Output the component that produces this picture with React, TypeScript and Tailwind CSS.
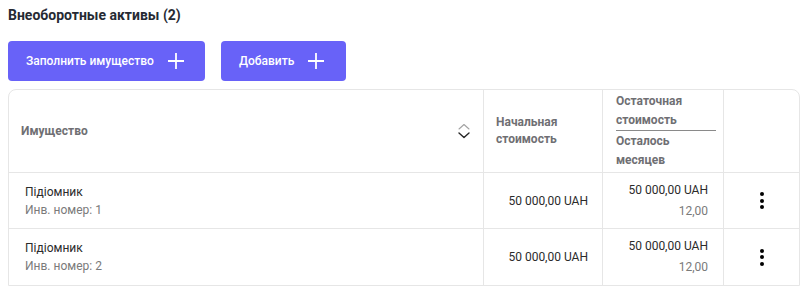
const ROWS = [
  { name: "Підіомник", inv: "Инв. номер: 1", start: "50 000,00 UAH", rest: "50 000,00 UAH", months: "12,00" },
  { name: "Підіомник", inv: "Инв. номер: 2", start: "50 000,00 UAH", rest: "50 000,00 UAH", months: "12,00" },
];

function PlusIcon() {
  return (
    <svg width="16" height="16" viewBox="0 0 16 16" fill="none" stroke="white" strokeWidth="1.8">
      <path d="M8 0 V16 M0 8 H16" />
    </svg>
  );
}

function SortIcon() {
  return (
    <svg width="14" height="16" viewBox="0 0 14 16" fill="none" strokeLinecap="round" strokeLinejoin="round">
      <path d="M2 6 L7 1.5 L12 6" stroke="#a3a3a3" strokeWidth="1.1" />
      <path d="M2 10 L7 14.5 L12 10" stroke="#262626" strokeWidth="1.4" />
    </svg>
  );
}

function Kebab() {
  return (
    <div className="flex flex-col items-center gap-[2.5px]">
      <span className="w-[4px] h-[4px] rounded-full bg-black" />
      <span className="w-[4px] h-[4px] rounded-full bg-black" />
      <span className="w-[4px] h-[4px] rounded-full bg-black" />
    </div>
  );
}

export default function App() {
  return (
    <div className="w-[811px] h-[301px] bg-white px-2 pt-[7px] font-['Roboto',sans-serif]">
      <h1 className="text-[14px] leading-[16px] font-bold text-[#262a33]">Внеоборотные активы (2)</h1>

      <div className="flex gap-4 mt-[18px]">
        <button type="button" className="h-10 w-[197px] rounded bg-[#6862f8] text-white text-[12px] font-medium flex items-center pl-[18px] gap-[14px]">
          Заполнить имущество
          <PlusIcon />
        </button>
        <button type="button" className="h-10 w-[125px] rounded bg-[#6862f8] text-white text-[12px] font-medium flex items-center pl-[18px] gap-[14px]">
          Добавить
          <PlusIcon />
        </button>
      </div>

      <div className="mt-2 w-[792px] border border-[#e6e6e6] rounded-t-lg">
        <div className="grid grid-cols-[474px_119px_121px_1fr] h-[83px] border-b border-[#e6e6e6] text-[12px] leading-[17px] font-bold text-[#6f6f73]">
          <div className="flex items-center justify-between pl-[12px] pr-[12px]">
            <span>Имущество</span>
            <SortIcon />
          </div>
          <div className="flex items-center pl-[12px] border-l border-[#e6e6e6]">
            <span>
              Начальная
              <br />
              стоимость
            </span>
          </div>
          <div className="flex flex-col justify-center pl-[13px] pr-[7px] border-l border-[#e6e6e6] leading-[19px]">
            <div className="border-b border-[#8a8a8a]">
              Остаточная
              <br />
              стоимость
            </div>
            <div className="pt-[1px]">
              Осталось
              <br />
              месяцев
            </div>
          </div>
          <div className="border-l border-[#e6e6e6]" />
        </div>

        {ROWS.map((r, i) => (
          <div
            key={i}
            className={`grid grid-cols-[474px_119px_121px_1fr] h-[56px] text-[12px] ${i < ROWS.length - 1 ? "border-b border-[#e6e6e6]" : ""}`}
          >
            <div className="flex flex-col justify-center pl-[16px] leading-[18px]">
              <span className="text-[#2b2b2b]">{r.name}</span>
              <span className="text-[#7a7a7a]">{r.inv}</span>
            </div>
            <div className="flex items-center justify-end pr-[14px] border-l border-[#e6e6e6] text-[#2b2b2b]">
              {r.start}
            </div>
            <div className="flex flex-col items-end justify-center pr-[15px] border-l border-[#e6e6e6] leading-[21px]">
              <span className="text-[#2b2b2b]">{r.rest}</span>
              <span className="text-[#7a7a7a]">{r.months}</span>
            </div>
            <div className="flex items-center justify-center border-l border-[#e6e6e6]">
              <Kebab />
            </div>
          </div>
        ))}
      </div>
    </div>
  );
}
